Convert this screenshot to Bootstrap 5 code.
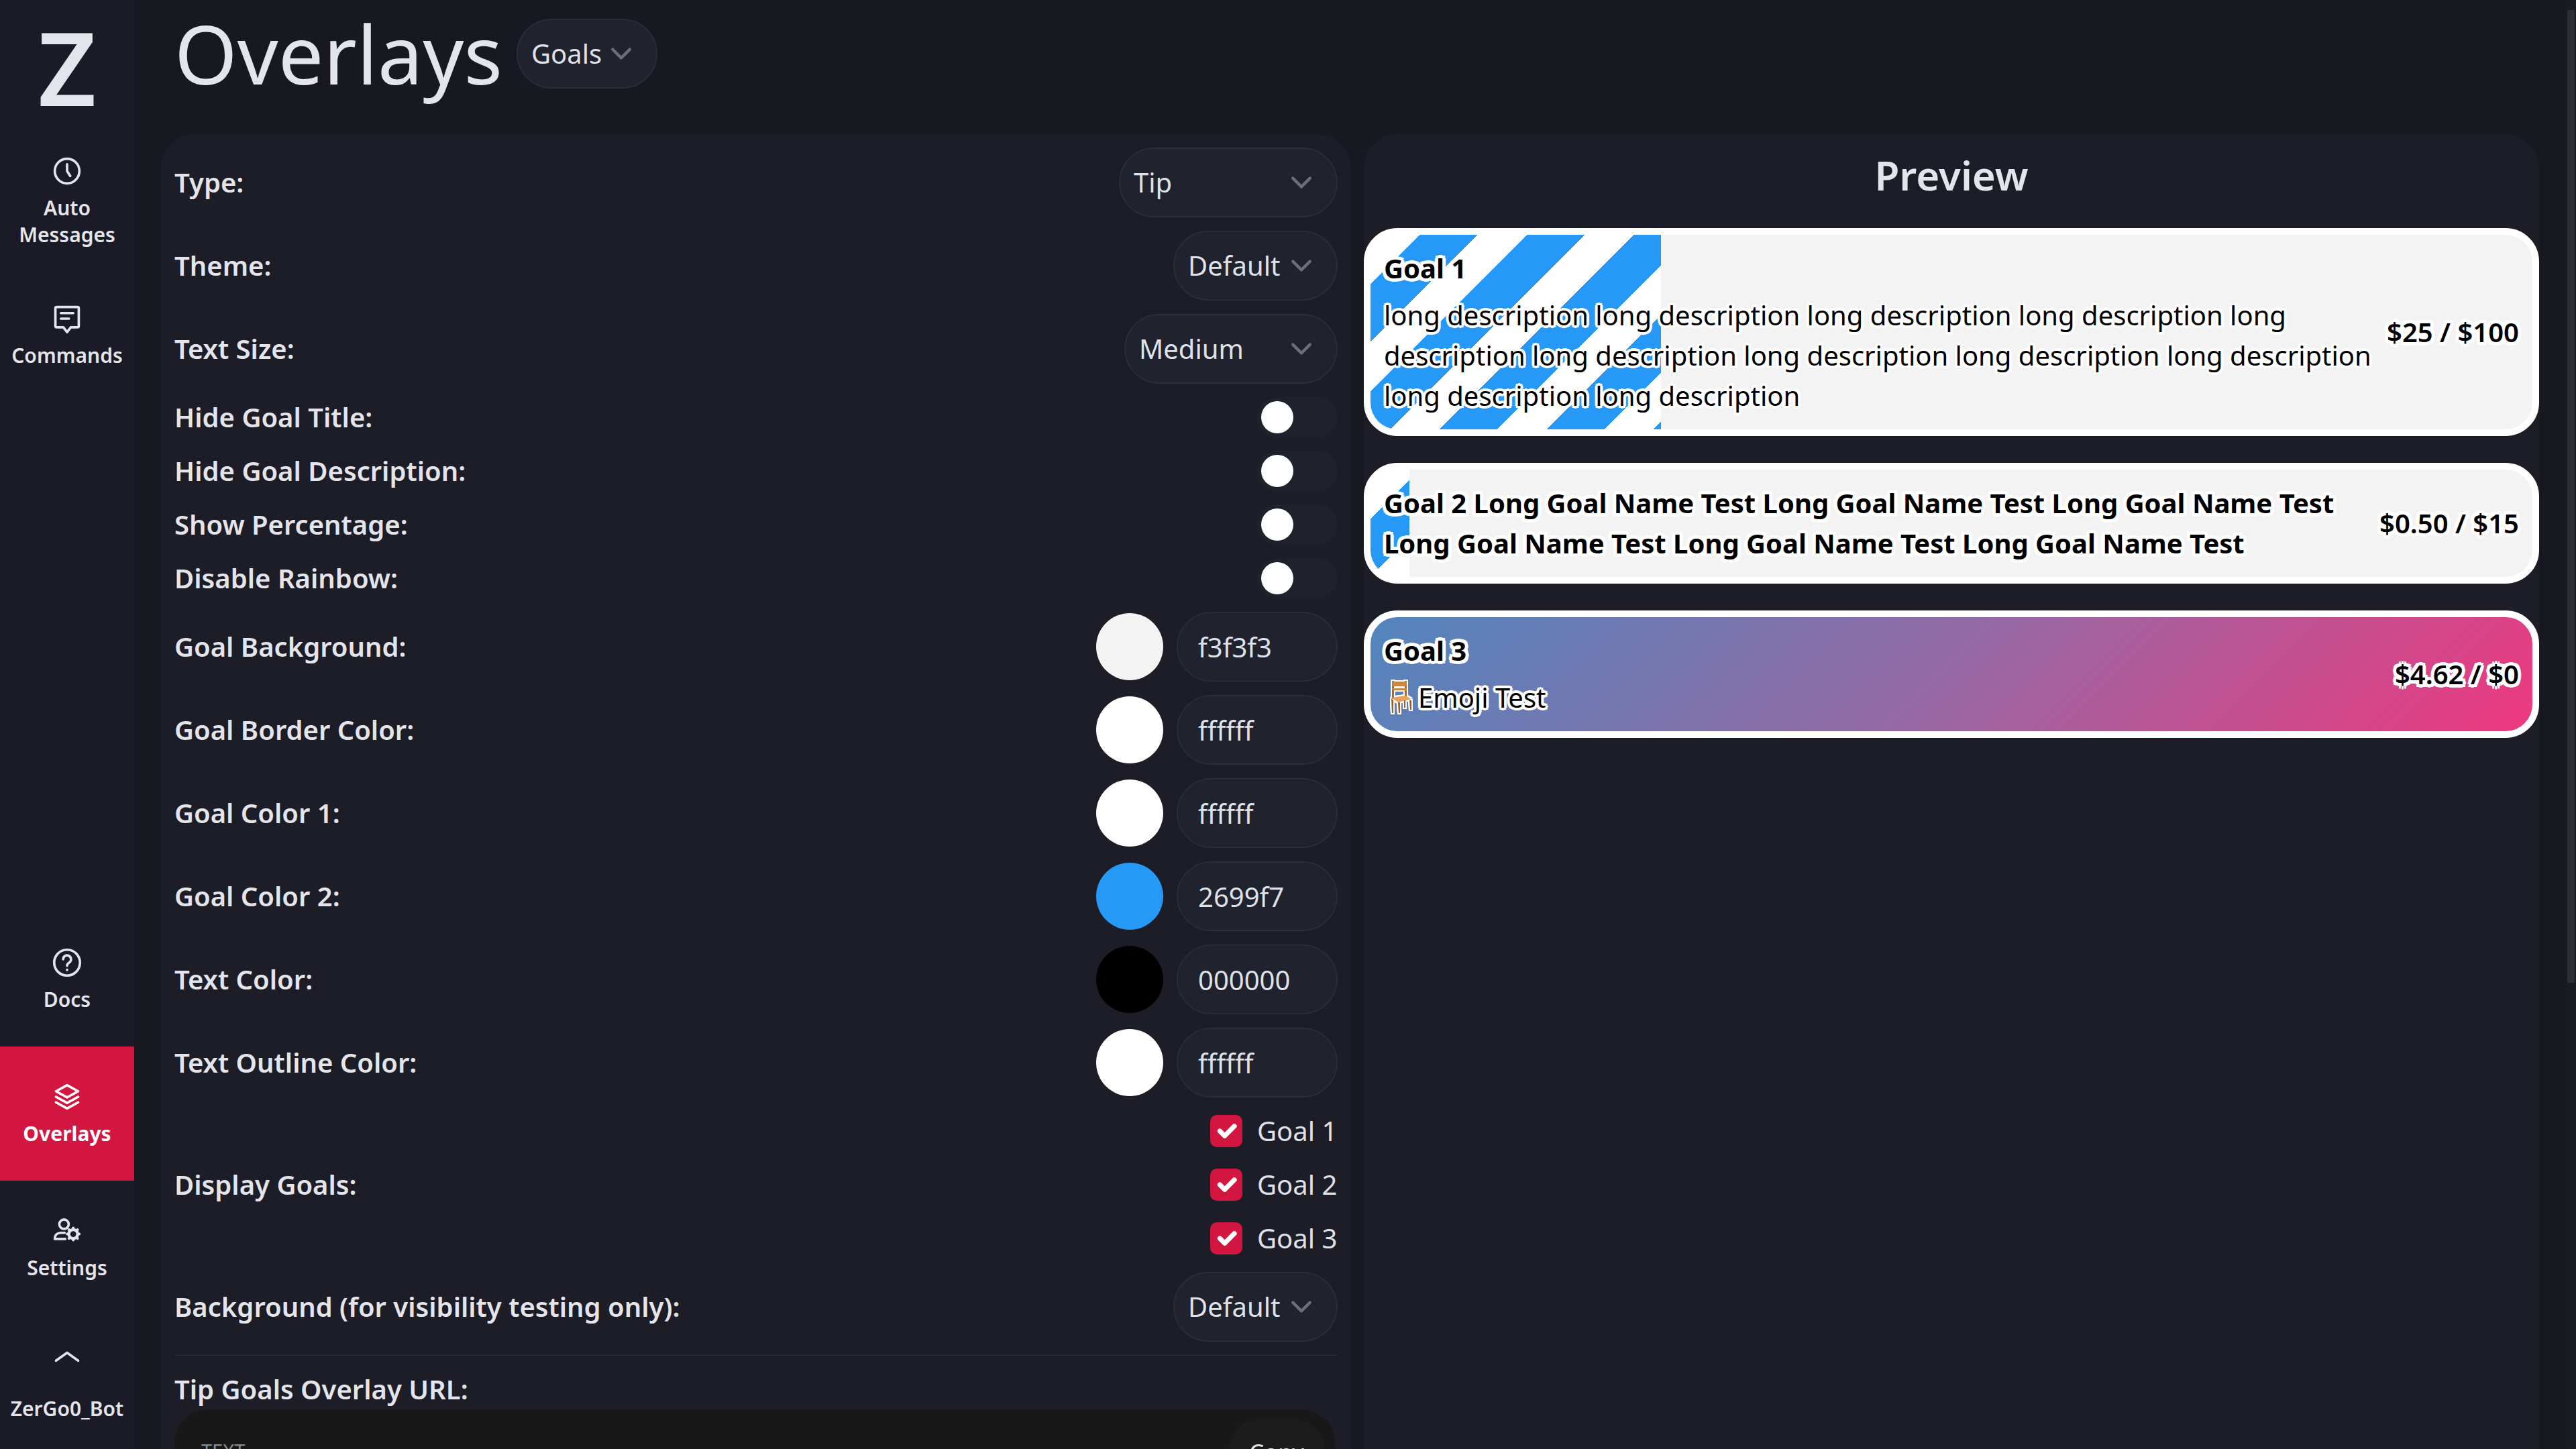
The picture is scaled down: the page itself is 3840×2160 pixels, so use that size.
<!DOCTYPE html>
<html lang="en">
<head>
    <meta charset="UTF-8">
    <meta name="viewport" content="width=device-width, initial-scale=1.0">
    <title>Overlays</title>
    <link href="https://cdn.jsdelivr.net/npm/bootstrap@5.3.0/dist/css/bootstrap.min.css" rel="stylesheet">
    <style>
        html, body {
            height: 2160px;
            overflow: hidden;
        }

        body {
            background: #171820;
            color: #e4e5ea;
            font-family: "Noto Sans", sans-serif;
            font-size: 40px;
            line-height: 60px;
        }

        .app-shell { height: 2160px; }

        /* sidebar */
        .side-bar {
            width: 200px;
            background: #1a1b26;
            flex-shrink: 0;
        }

        .logo-z {
            height: 180px;
            font-size: 152px;
            font-weight: 600;
            line-height: 200px;
            text-align: center;
        }

        .side-item {
            min-height: 200px;
            padding: 54px 0 30px;
            font-size: 30px;
            font-weight: 600;
            line-height: 40px;
            text-align: center;
            color: #e4e5ea;
            text-decoration: none;
        }

        .side-item svg {
            display: block;
            width: 44px;
            height: 44px;
            margin: -1px auto 13px;
            fill: none;
            stroke: currentColor;
            stroke-width: 2;
            stroke-linecap: round;
            stroke-linejoin: round;
        }

        .side-item.is-active {
            background: #d3163f;
            color: #fff;
            font-weight: 700;
        }

        .user-item { padding-top: 40px; }
        .user-item svg { margin-bottom: 37px; }

        /* main area */
        .main-area {
            padding: 0 40px;
            min-width: 0;
        }

        .title-row {
            height: 200px;
            padding: 28px 0 0 20px;
        }

        .page-title {
            margin: 0 21px 0 0;
            font-size: 120px;
            font-weight: 400;
            line-height: 104px;
        }

        .panels-row { gap: 19px; }

        .panel-box {
            background: #1c1d27;
            border-radius: 50px 50px 0 0;
            height: 1960px;
            overflow: hidden;
            padding: 20px;
        }

        .panel-left { width: 1774px; flex-shrink: 0; }

        .panel-right {
            flex-grow: 1;
            min-width: 0;
            padding: 0;
        }

        .setting-list { gap: 20px; }

        .setting-label { font-weight: 600; }

        .swatch-group { gap: 20px; }

        /* form controls */
        .form-select.pill-select, .form-control.pill-input {
            height: 104px;
            background-color: #20232e;
            border: 2px solid #2a2c38;
            border-radius: 52px;
            color: #dfe1e8;
            font-size: 40px;
            line-height: 60px;
            box-shadow: none;
        }

        .form-select.pill-select {
            padding: 0 66px 0 20px;
            background-image: url("data:image/svg+xml,%3csvg xmlns='http://www.w3.org/2000/svg' viewBox='0 0 16 16'%3e%3cpath fill='none' stroke='%236c6e79' stroke-linecap='round' stroke-linejoin='round' stroke-width='2' d='m2 5 6 6 6-6'/%3e%3c/svg%3e");
            background-position: right 35px center;
            background-size: 34px 34px;
        }

        .select-tip { width: 326px; }
        .select-medium { width: 318px; }
        .select-short { width: 245px; }
        .select-goals { width: 210px; }

        .form-control.pill-input {
            width: 240px;
            padding: 0 30px;
        }

        .swatch-dot {
            width: 100px;
            height: 100px;
            border-radius: 50%;
        }

        .swatch-f3 { background: #f3f3f3; }
        .swatch-white { background: #fff; }
        .swatch-blue { background: #2699f7; }
        .swatch-black { background: #000; }

        .form-switch.toggle-wrap {
            padding: 0;
            margin: 0;
            min-height: 0;
            height: 60px;
        }

        .form-switch .toggle-input {
            --bs-form-switch-bg: url("data:image/svg+xml,%3csvg xmlns='http://www.w3.org/2000/svg' viewBox='-5 -5 10 10'%3e%3ccircle r='4' fill='%23fff'/%3e%3c/svg%3e");
            width: 120px;
            height: 60px;
            margin: 0;
            background-color: #1f212c;
            border: 0;
            border-radius: 30px;
            box-shadow: none;
        }

        .check-row {
            height: 60px;
            gap: 22px;
        }

        .check-row .form-check-input {
            width: 48px;
            height: 48px;
            margin: 0;
            border: 0;
            border-radius: 10px;
            background-color: #d3163f;
            box-shadow: none;
        }

        .check-text {
            color: #dfe1e8;
            width: 120px;
            white-space: nowrap;
        }

        .panel-rule {
            margin: 20px 0;
            border-color: #2a2c38;
            opacity: 1;
        }

        .url-label { font-weight: 600; }

        .url-box {
            height: 200px;
            margin: 0 4px 0 0;
            background: #181818;
            border-radius: 50px;
            padding: 14px 14px 0 40px;
        }

        .url-tag {
            font-size: 29px;
            color: #8a8a8a;
            line-height: 96px;
        }

        .btn.copy-btn {
            width: 146px;
            height: 100px;
            padding: 0;
            background: #1c1c1c;
            border: 0;
            border-radius: 50px;
            color: #e4e5ea;
            font-size: 35px;
        }

        /* preview */
        .preview-title {
            margin: 0;
            height: 140px;
            font-size: 60px;
            font-weight: 600;
            line-height: 122px;
            text-align: center;
        }

        .goal-list { gap: 40px; }

        .goal-card {
            border: 10px solid #fff;
            border-radius: 50px;
            background: #f3f3f3;
            color: #000;
            padding: 20px;
            overflow: hidden;
            gap: 20px;
        }

        .goal-fill {
            top: 0;
            left: 0;
            bottom: 0;
            background: repeating-linear-gradient(135deg, #fff 0, #fff 52px, #2699f7 52px, #2699f7 112.8px);
        }

        .fill-25 { width: 25%; }
        .fill-3 { width: 3.33%; }

        .goal-card.is-rainbow {
            background: linear-gradient(135deg, #5285bd 0%, #9669a4 50%, #ee387f 100%);
        }

        .goal-text {
            min-width: 0;
            flex: 1 1 0;
            text-shadow: -3px -3px 0 #fff, 3px -3px 0 #fff, -3px 3px 0 #fff, 3px 3px 0 #fff,
                0 -4px 0 #fff, 0 4px 0 #fff, -4px 0 0 #fff, 4px 0 0 #fff;
        }

        .goal-name {
            font-weight: 700;
            text-shadow: -4px -4px 0 #fff, 4px -4px 0 #fff, -4px 4px 0 #fff, 4px 4px 0 #fff,
                0 -5px 0 #fff, 0 5px 0 #fff, -5px 0 0 #fff, 5px 0 0 #fff;
        }

        .goal-desc { margin-top: 10px; }

        .goal-amount {
            font-weight: 600;
            white-space: nowrap;
            text-shadow: -4px -4px 0 #fff, 4px -4px 0 #fff, -4px 4px 0 #fff, 4px 4px 0 #fff,
                0 -5px 0 #fff, 0 5px 0 #fff, -5px 0 0 #fff, 5px 0 0 #fff;
        }

        .chair-icon {
            width: 34px;
            height: 50px;
            margin: 0 9px 0 8px;
            vertical-align: -9px;
            filter: drop-shadow(2px 0 0 #fff) drop-shadow(-2px 0 0 #fff) drop-shadow(0 -2px 0 #fff) drop-shadow(0 2px 0 #fff);
        }

        /* scrollbar */
        .fake-scroll {
            width: 15px;
            background: #1a1b22;
            padding: 15px 2px 0;
            flex-shrink: 0;
        }

        .fake-thumb {
            height: 1450px;
            background: #2e2f36;
        }
    </style>
</head>
<body>
    <div class="app-shell d-flex">
        <nav class="side-bar d-flex flex-column">
            <div class="logo-z">Z</div>
            <a class="side-item d-block" href="#">
                <svg viewBox="0 0 24 24"><circle cx="12" cy="12" r="10"/><path d="M12 6.500V12l2.500 4"/></svg>
                Auto<br>Messages
            </a>
            <a class="side-item d-block" href="#">
                <svg viewBox="0 0 24 24"><path d="M3.500 2.500h17a1 1 0 0 1 1 1v14.500a1 1 0 0 1-1 1H15L12 23l-3-4H3.500a1 1 0 0 1-1-1V3.500a1 1 0 0 1 1-1z"/><path d="M7 7.500h10M7 12h6.500"/></svg>
                Commands
            </a>
            <div class="flex-grow-1"></div>
            <a class="side-item d-block" href="#">
                <svg viewBox="0 0 24 24"><circle cx="12" cy="12" r="10.500"/><path d="M8.800 9.200a3.200 3.200 0 1 1 5 2.700c-1.100.7-1.800 1.300-1.800 2.600"/><path d="M12 17.800v.2"/></svg>
                Docs
            </a>
            <a class="side-item is-active d-block" href="#">
                <svg viewBox="0 0 24 24"><path d="M12 2.500 21 7.500l-9 5-9-5z"/><path d="M3 12l9 5 9-5"/><path d="M3 16.500l9 5 9-5"/></svg>
                Overlays
            </a>
            <a class="side-item d-block" href="#">
                <svg viewBox="0 0 24 24"><circle cx="9.500" cy="6.500" r="3.800"/><path d="M10 13.500H7C4 13.500 2 15.300 2 18.500h8.500"/><circle cx="17" cy="14.500" r="3.600" stroke-width="2.400"/><path stroke-width="2.200" d="M17 9.600v.9M17 18.500v.9M12.100 14.500h.9M21 14.500h.9M13.500 11l.7.7M19.800 17.300l.7.7M13.500 18l.7-.7M19.800 11.700l.7-.7"/></svg>
                Settings
            </a>
            <a class="side-item user-item d-block" href="#">
                <svg viewBox="0 0 24 24"><path d="M3 16 12 9.500 21 16"/></svg>
                ZerGo0_Bot
            </a>
        </nav>

        <main class="main-area flex-grow-1">
            <div class="title-row d-flex align-items-start">
                <h1 class="page-title">Overlays</h1>
                <select class="form-select pill-select select-goals">
                    <option>Goals</option>
                </select>
            </div>

            <div class="panels-row d-flex">
                <section class="panel-box panel-left">
                    <div class="setting-list d-flex flex-column">
                        <div class="d-flex justify-content-between align-items-center">
                            <span class="setting-label">Type:</span>
                            <select class="form-select pill-select select-tip"><option>Tip</option></select>
                        </div>
                        <div class="d-flex justify-content-between align-items-center">
                            <span class="setting-label">Theme:</span>
                            <select class="form-select pill-select select-short"><option>Default</option></select>
                        </div>
                        <div class="d-flex justify-content-between align-items-center">
                            <span class="setting-label">Text Size:</span>
                            <select class="form-select pill-select select-medium"><option>Medium</option></select>
                        </div>
                        <div class="d-flex justify-content-between align-items-center">
                            <span class="setting-label">Hide Goal Title:</span>
                            <div class="form-check form-switch toggle-wrap"><input class="form-check-input toggle-input" type="checkbox"></div>
                        </div>
                        <div class="d-flex justify-content-between align-items-center">
                            <span class="setting-label">Hide Goal Description:</span>
                            <div class="form-check form-switch toggle-wrap"><input class="form-check-input toggle-input" type="checkbox"></div>
                        </div>
                        <div class="d-flex justify-content-between align-items-center">
                            <span class="setting-label">Show Percentage:</span>
                            <div class="form-check form-switch toggle-wrap"><input class="form-check-input toggle-input" type="checkbox"></div>
                        </div>
                        <div class="d-flex justify-content-between align-items-center">
                            <span class="setting-label">Disable Rainbow:</span>
                            <div class="form-check form-switch toggle-wrap"><input class="form-check-input toggle-input" type="checkbox"></div>
                        </div>
                        <div class="d-flex justify-content-between align-items-center">
                            <span class="setting-label">Goal Background:</span>
                            <div class="d-flex align-items-center swatch-group">
                                <span class="swatch-dot swatch-f3"></span>
                                <input class="form-control pill-input" type="text" value="f3f3f3">
                            </div>
                        </div>
                        <div class="d-flex justify-content-between align-items-center">
                            <span class="setting-label">Goal Border Color:</span>
                            <div class="d-flex align-items-center swatch-group">
                                <span class="swatch-dot swatch-white"></span>
                                <input class="form-control pill-input" type="text" value="ffffff">
                            </div>
                        </div>
                        <div class="d-flex justify-content-between align-items-center">
                            <span class="setting-label">Goal Color 1:</span>
                            <div class="d-flex align-items-center swatch-group">
                                <span class="swatch-dot swatch-white"></span>
                                <input class="form-control pill-input" type="text" value="ffffff">
                            </div>
                        </div>
                        <div class="d-flex justify-content-between align-items-center">
                            <span class="setting-label">Goal Color 2:</span>
                            <div class="d-flex align-items-center swatch-group">
                                <span class="swatch-dot swatch-blue"></span>
                                <input class="form-control pill-input" type="text" value="2699f7">
                            </div>
                        </div>
                        <div class="d-flex justify-content-between align-items-center">
                            <span class="setting-label">Text Color:</span>
                            <div class="d-flex align-items-center swatch-group">
                                <span class="swatch-dot swatch-black"></span>
                                <input class="form-control pill-input" type="text" value="000000">
                            </div>
                        </div>
                        <div class="d-flex justify-content-between align-items-center">
                            <span class="setting-label">Text Outline Color:</span>
                            <div class="d-flex align-items-center swatch-group">
                                <span class="swatch-dot swatch-white"></span>
                                <input class="form-control pill-input" type="text" value="ffffff">
                            </div>
                        </div>
                        <div class="d-flex justify-content-between align-items-center">
                            <span class="setting-label">Display Goals:</span>
                            <div class="d-flex flex-column setting-list">
                                <label class="check-row d-flex align-items-center"><input class="form-check-input" type="checkbox" checked><span class="check-text">Goal 1</span></label>
                                <label class="check-row d-flex align-items-center"><input class="form-check-input" type="checkbox" checked><span class="check-text">Goal 2</span></label>
                                <label class="check-row d-flex align-items-center"><input class="form-check-input" type="checkbox" checked><span class="check-text">Goal 3</span></label>
                            </div>
                        </div>
                        <div class="d-flex justify-content-between align-items-center">
                            <span class="setting-label">Background (for visibility testing only):</span>
                            <select class="form-select pill-select select-short"><option>Default</option></select>
                        </div>
                    </div>
                    <hr class="panel-rule">
                    <div class="url-label">Tip Goals Overlay URL:</div>
                    <div class="url-box d-flex justify-content-between align-items-start">
                        <span class="url-tag">TEXT</span>
                        <button class="btn copy-btn" type="button">Copy</button>
                    </div>
                </section>

                <section class="panel-box panel-right">
                    <h2 class="preview-title">Preview</h2>
                    <div class="goal-list d-flex flex-column">
                        <div class="goal-card d-flex align-items-center position-relative">
                            <div class="goal-fill fill-25 position-absolute"></div>
                            <div class="goal-text position-relative">
                                <div class="goal-name">Goal 1</div>
                                <div class="goal-desc">long description long description long description long description long description long description long description long description long description long description long description</div>
                            </div>
                            <div class="goal-amount position-relative">$25 / $100</div>
                        </div>
                        <div class="goal-card d-flex align-items-center position-relative">
                            <div class="goal-fill fill-3 position-absolute"></div>
                            <div class="goal-text position-relative">
                                <div class="goal-name">Goal 2 Long Goal Name Test Long Goal Name Test Long Goal Name Test Long Goal Name Test Long Goal Name Test Long Goal Name Test</div>
                            </div>
                            <div class="goal-amount position-relative">$0.50 / $15</div>
                        </div>
                        <div class="goal-card is-rainbow d-flex align-items-center position-relative">
                            <div class="goal-text position-relative">
                                <div class="goal-name">Goal 3</div>
                                <div class="goal-desc"><svg class="chair-icon" viewBox="0 0 34 50"><path fill="#a9682f" d="M4 1h3v27H4zM23 1h3v24h-3z"/><path fill="#c98544" d="M4 2h22v7H4zM4 12h22v3H4z"/><path fill="#e8a25a" d="M3 26 24 23l9 5-20 5z"/><path fill="#9c5c28" d="M3 27l3 3v19H4zM13 33h3v16h-2zM30 30h3v14h-2zM22 30h2v11h-2z"/></svg>Emoji Test</div>
                            </div>
                            <div class="goal-amount position-relative">$4.62 / $0</div>
                        </div>
                    </div>
                </section>
            </div>
        </main>

        <div class="fake-scroll">
            <div class="fake-thumb"></div>
        </div>
    </div>
</body>
</html>
